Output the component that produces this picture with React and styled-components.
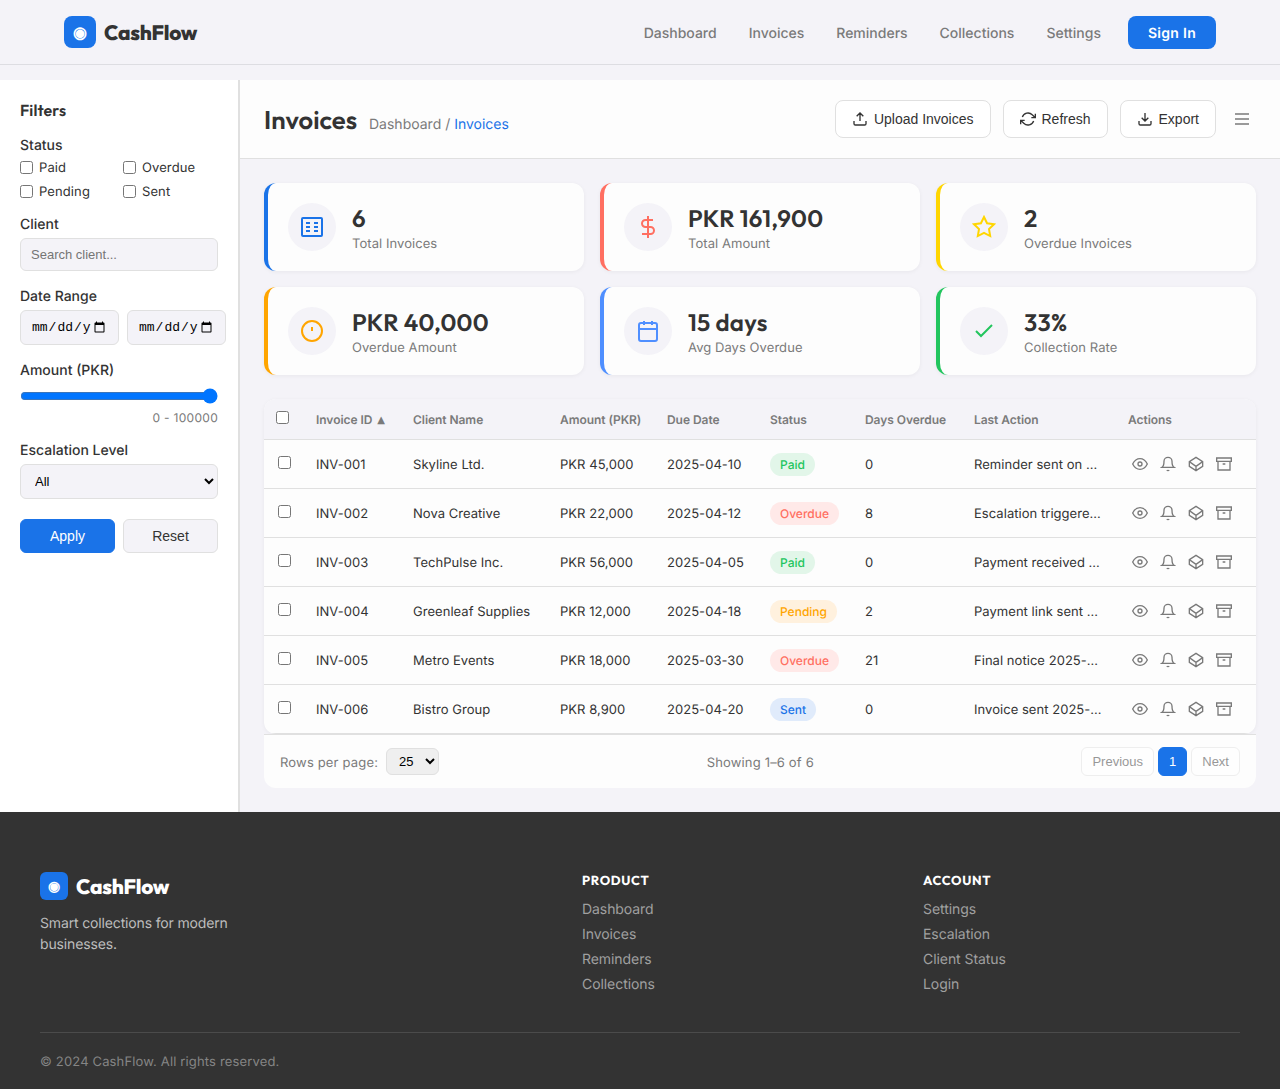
import React, { useState } from "react";
import styled, { createGlobalStyle, css } from "styled-components";

const navLinks = ["Dashboard", "Invoices", "Reminders", "Collections", "Settings"];

const stats = [
  { value: "6", label: "Total Invoices", color: "#1a73e8", icon: "sheet" },
  { value: "PKR 161,900", label: "Total Amount", color: "#ff6f61", icon: "dollar" },
  { value: "2", label: "Overdue Invoices", color: "#ffd600", icon: "star" },
  { value: "PKR 40,000", label: "Overdue Amount", color: "#ffa500", icon: "alert" },
  { value: "15 days", label: "Avg Days Overdue", color: "#4f8fff", icon: "calendar" },
  { value: "33%", label: "Collection Rate", color: "#22c55e", icon: "check" },
];

const invoices = [
  { id: "INV-001", client: "Skyline Ltd.", amount: "PKR 45,000", due: "2025-04-10", status: "Paid", days: 0, action: "Reminder sent on …" },
  { id: "INV-002", client: "Nova Creative", amount: "PKR 22,000", due: "2025-04-12", status: "Overdue", days: 8, action: "Escalation triggere…" },
  { id: "INV-003", client: "TechPulse Inc.", amount: "PKR 56,000", due: "2025-04-05", status: "Paid", days: 0, action: "Payment received …" },
  { id: "INV-004", client: "Greenleaf Supplies", amount: "PKR 12,000", due: "2025-04-18", status: "Pending", days: 2, action: "Payment link sent …" },
  { id: "INV-005", client: "Metro Events", amount: "PKR 18,000", due: "2025-03-30", status: "Overdue", days: 21, action: "Final notice 2025-…" },
  { id: "INV-006", client: "Bistro Group", amount: "PKR 8,900", due: "2025-04-20", status: "Sent", days: 0, action: "Invoice sent 2025-…" },
];

const columns = ["Client Name", "Amount (PKR)", "Due Date", "Status", "Days Overdue", "Last Action", "Actions"];
const columnWidths = [40, 97, 147, 107, 103, 95, 109, 154, 140];

const footerColumns = [
  { title: "PRODUCT", links: ["Dashboard", "Invoices", "Reminders", "Collections"] },
  { title: "ACCOUNT", links: ["Settings", "Escalation", "Client Status", "Login"] },
];

const badgeColors = {
  Paid: { color: "#22c55e", background: "#e2f6e9" },
  Overdue: { color: "#ff6f61", background: "#ffe9e8" },
  Pending: { color: "#ffa500", background: "#fff1de" },
  Sent: { color: "#1a73e8", background: "#e0ebfb" },
};

const paths = {
  sheet: (
    <>
      <rect x="2" y="3" width="20" height="18" rx="1" />
      <path d="M6 8h4M14 8h4M6 12h4M14 12h4M6 16h4M14 16h4" />
    </>
  ),
  dollar: <path d="M12 1v22M17 5H9.5a3.5 3.5 0 0 0 0 7h5a3.5 3.5 0 0 1 0 7H6" />,
  star: <path d="M12 2l3.09 6.26L22 9.27l-5 4.87 1.18 6.88L12 17.77l-6.18 3.25L7 14.14 2 9.27l6.91-1.01z" />,
  alert: (
    <>
      <circle cx="12" cy="12" r="10" />
      <path d="M12 8v4" />
    </>
  ),
  calendar: (
    <>
      <rect x="3" y="4" width="18" height="18" rx="2" />
      <path d="M16 2v4M8 2v4M3 10h18" />
    </>
  ),
  check: <path d="M20 6L9 17l-5-5" />,
  upload: <path d="M21 15v4a2 2 0 0 1-2 2H5a2 2 0 0 1-2-2v-4M17 8l-5-5-5 5M12 3v12" />,
  download: <path d="M21 15v4a2 2 0 0 1-2 2H5a2 2 0 0 1-2-2v-4M7 10l5 5 5-5M12 15V3" />,
  refresh: <path d="M23 4v6h-6M1 20v-6h6M3.51 9a9 9 0 0 1 14.85-3.36L23 10M1 14l4.64 4.36A9 9 0 0 0 20.49 15" />,
  menu: <path d="M3.6 12h16.8M3.6 6h16.8M3.6 18h16.8" />,
  eye: (
    <>
      <path d="M1 12s4-8 11-8 11 8 11 8-4 8-11 8-11-8-11-8z" />
      <circle cx="12" cy="12" r="3" />
    </>
  ),
  bell: <path d="M18 8A6 6 0 0 0 6 8c0 7-3 9-3 9h18s-3-2-3-9M13.73 21a2 2 0 0 1-3.46 0" />,
  box: <path d="M12 2l10 6.5v7L12 22 2 15.5v-7zM12 22v-6.5M22 8.5l-10 7-10-7" />,
  archive: <path d="M21 8v13H3V8M1 3h22v5H1zM10 12h4" />,
};

const Icon = ({ name, size = 16 }) => (
  <svg width={size} height={size} viewBox="0 0 24 24" fill="none" stroke="currentColor" strokeWidth="2">
    {paths[name]}
  </svg>
);

const Header = () => (
  <S.Header>
    <S.Brand>
      <S.Logo>◉</S.Logo>
      <S.BrandName>CashFlow</S.BrandName>
    </S.Brand>
    <S.Nav>
      {navLinks.map((link) => (
        <S.NavLink key={link}>{link}</S.NavLink>
      ))}
      <S.SignIn>Sign In</S.SignIn>
    </S.Nav>
  </S.Header>
);

const Filters = () => {
  const [amount, setAmount] = useState(100000);

  return (
    <S.Sidebar>
      <h3>Filters</h3>
      <S.Label>Status</S.Label>
      <S.StatusGrid>
        {["Paid", "Overdue", "Pending", "Sent"].map((status) => (
          <label key={status}>
            <S.Check type="checkbox" />
            <span>{status}</span>
          </label>
        ))}
      </S.StatusGrid>
      <S.Label>Client</S.Label>
      <S.ClientInput placeholder="Search client..." />
      <S.Label>Date Range</S.Label>
      <S.DateRow>
        <S.DateInput type="date" />
        <S.DateInput type="date" />
      </S.DateRow>
      <S.Label>Amount (PKR)</S.Label>
      <S.Range type="range" min="0" max="100000" value={amount} onChange={(e) => setAmount(e.target.value)} />
      <S.RangeText>0 - {amount}</S.RangeText>
      <S.Label>Escalation Level</S.Label>
      <S.LevelSelect>
        <option>All</option>
      </S.LevelSelect>
      <S.FilterButtons>
        <S.FilterButton $primary>Apply</S.FilterButton>
        <S.FilterButton>Reset</S.FilterButton>
      </S.FilterButtons>
    </S.Sidebar>
  );
};

const InvoiceTable = () => (
  <S.TableBox>
    <S.Table>
      <colgroup>
        {columnWidths.map((width, i) => (
          <col key={i} width={width} />
        ))}
      </colgroup>
      <thead>
        <tr>
          <S.HeadCell>
            <S.Check type="checkbox" $head />
          </S.HeadCell>
          <S.HeadCell>
            Invoice ID <S.SortArrow>▲</S.SortArrow>
          </S.HeadCell>
          {columns.map((column) => (
            <S.HeadCell key={column}>{column}</S.HeadCell>
          ))}
        </tr>
      </thead>
      <tbody>
        {invoices.map((invoice) => (
          <tr key={invoice.id}>
            <S.Cell>
              <S.Check type="checkbox" $row />
            </S.Cell>
            <S.Cell $text>{invoice.id}</S.Cell>
            <S.Cell $text>{invoice.client}</S.Cell>
            <S.Cell $text>{invoice.amount}</S.Cell>
            <S.Cell $text>{invoice.due}</S.Cell>
            <S.Cell>
              <S.Badge $status={invoice.status}>{invoice.status}</S.Badge>
            </S.Cell>
            <S.Cell $text>{invoice.days}</S.Cell>
            <S.Cell $text>{invoice.action}</S.Cell>
            <S.Cell>
              <S.Actions>
                {["eye", "bell", "box", "archive"].map((name) => (
                  <S.IconButton key={name}>
                    <Icon name={name} />
                  </S.IconButton>
                ))}
              </S.Actions>
            </S.Cell>
          </tr>
        ))}
      </tbody>
    </S.Table>
  </S.TableBox>
);

const Footer = () => (
  <S.Footer>
    <S.FooterGrid>
      <div>
        <S.Brand>
          <S.Logo $small>◉</S.Logo>
          <S.BrandName $light>CashFlow</S.BrandName>
        </S.Brand>
        <S.Tagline>Smart collections for modern businesses.</S.Tagline>
      </div>
      {footerColumns.map(({ title, links }) => (
        <S.FooterColumn key={title}>
          <h4>{title}</h4>
          {links.map((link) => (
            <a key={link}>{link}</a>
          ))}
        </S.FooterColumn>
      ))}
    </S.FooterGrid>
    <S.Copyright>© 2024 CashFlow. All rights reserved.</S.Copyright>
  </S.Footer>
);

const App = () => (
  <>
    <GlobalStyle />
    <Header />
    <S.Layout>
      <Filters />
      <S.Main>
        <S.PageHead>
          <S.Title>
            <h1>Invoices</h1>
            <p>
              Dashboard / <span>Invoices</span>
            </p>
          </S.Title>
          <S.Toolbar>
            <S.ToolButton>
              <Icon name="upload" />
              Upload Invoices
            </S.ToolButton>
            <S.ToolButton>
              <Icon name="refresh" />
              Refresh
            </S.ToolButton>
            <S.ToolButton>
              <Icon name="download" />
              Export
            </S.ToolButton>
            <S.MenuButton>
              <Icon name="menu" size={20} />
            </S.MenuButton>
          </S.Toolbar>
        </S.PageHead>
        <S.Content>
          <S.Stats>
            {stats.map(({ value, label, color, icon }) => (
              <S.Card key={label} $color={color}>
                <S.CardIcon $color={color}>
                  <Icon name={icon} size={24} />
                </S.CardIcon>
                <S.CardText>
                  <S.Value>{value}</S.Value>
                  <S.Caption>{label}</S.Caption>
                </S.CardText>
              </S.Card>
            ))}
          </S.Stats>
          <InvoiceTable />
          <S.Pagination>
            <S.RowsPerPage>
              <S.PageText>Rows per page:</S.PageText>
              <select>
                <option>25</option>
              </select>
            </S.RowsPerPage>
            <S.PageText>Showing 1–6 of 6</S.PageText>
            <S.Pages>
              <S.PageButton disabled>Previous</S.PageButton>
              <S.PageButton $active>1</S.PageButton>
              <S.PageButton disabled>Next</S.PageButton>
            </S.Pages>
          </S.Pagination>
        </S.Content>
      </S.Main>
    </S.Layout>
    <Footer />
  </>
);

const display = css`
  font-family: Outfit, Lato, sans-serif;
`;

const field = css`
  background: #f4f3f8;
  border: 1px solid #e0e0e0;
  border-radius: 6px;
`;

const GlobalStyle = createGlobalStyle`
  * {
    box-sizing: border-box;
  }
  body {
    margin: 0;
    background: #f4f3f8;
    color: #333;
    font-family: Inter, sans-serif;
    text-rendering: geometricPrecision;
  }
  h1, h3, h4, p {
    margin: 0;
  }
  button, input, select {
    font-family: "Liberation Sans", Arial, sans-serif;
  }
`;

const S = {
  Header: styled.header`
    height: 65px;
    padding: 0 64px;
    border-bottom: 1px solid #dddde2;
    display: flex;
    align-items: center;
    justify-content: space-between;
  `,
  Brand: styled.div`
    display: flex;
    align-items: center;
    gap: 8px;
  `,
  Logo: styled.div`
    width: ${({ $small }) => ($small ? 28 : 32)}px;
    height: ${({ $small }) => ($small ? 28 : 32)}px;
    border-radius: ${({ $small }) => ($small ? 6 : 8)}px;
    background: #1a73e8;
    color: #fff;
    font-size: ${({ $small }) => ($small ? 14 : 16)}px;
    font-weight: bold;
    display: flex;
    align-items: center;
    justify-content: center;
  `,
  BrandName: styled.span`
    ${display}
    padding-top: 3px;
    font-size: 20.8px;
    font-weight: 800;
    line-height: 25px;
    letter-spacing: -0.28px;
    color: ${({ $light }) => ($light ? "#fff" : "#333")};
  `,
  Nav: styled.nav`
    display: flex;
    align-items: center;
    gap: 32px;
    font-size: 14px;
    font-weight: 500;
    color: #7a7a7a;
  `,
  NavLink: styled.a`
    padding-top: 2px;
  `,
  SignIn: styled.a`
    margin-left: -5px;
    padding: 9px 20px 7px;
    border-radius: 8px;
    background: #1a73e8;
    color: #fff;
    font-weight: 600;
    line-height: 17px;
    letter-spacing: 0.28px;
  `,
  Layout: styled.div`
    margin-top: 15px;
    display: flex;
  `,
  Sidebar: styled.aside`
    width: 240px;
    flex-shrink: 0;
    padding: 20px;
    background: #fff;
    border-right: 2px solid #e0e0e0;
    > h3 {
      ${display}
      font-size: 16px;
      font-weight: 600;
      line-height: 22px;
      letter-spacing: 0.1px;
      margin-bottom: 15px;
    }
  `,
  Label: styled.div`
    font-size: 14px;
    font-weight: 500;
    line-height: 17px;
    margin-bottom: 5px;
  `,
  Check: styled.input`
    width: 13px;
    height: 13px;
    margin: 0;
    ${({ $head }) => $head && "display: block; margin: -4px 0 0;"}
    ${({ $row }) => $row && "display: block; margin: -4px 0 0 2px;"}
  `,
  StatusGrid: styled.div`
    display: grid;
    grid-template-columns: 95px 95px;
    gap: 8px;
    margin-bottom: 17px;
    > label {
      display: flex;
      align-items: center;
      gap: 6px;
      height: 16px;
      font-size: 13px;
      letter-spacing: 0.1px;
    }
    span {
      padding-top: 2px;
    }
  `,
  ClientInput: styled.input`
    ${field}
    display: block;
    width: 198px;
    height: 33px;
    padding: 0 10px;
    font-size: 13px;
    margin-bottom: 17px;
  `,
  DateRow: styled.div`
    display: flex;
    gap: 8px;
    margin-bottom: 17px;
  `,
  DateInput: styled.input`
    ${field}
    width: 99px;
    flex-shrink: 0;
    height: 35px;
    padding: 8px 10px;
    font-family: "Liberation Mono", monospace;
    font-size: 13px;
  `,
  Range: styled.input`
    display: block;
    width: 198px;
    height: 16px;
    margin: 9px 0 6px;
  `,
  RangeText: styled.div`
    font-size: 12px;
    line-height: 16px;
    letter-spacing: 0.28px;
    color: #7a7a7a;
    text-align: right;
    margin-bottom: 16px;
  `,
  LevelSelect: styled.select`
    ${field}
    display: block;
    width: 198px;
    height: 35px;
    padding: 0 10px;
    font-size: 13px;
  `,
  FilterButtons: styled.div`
    display: flex;
    gap: 8px;
    margin-top: 20px;
  `,
  FilterButton: styled.button`
    ${field}
    flex: 1;
    height: 34px;
    font-size: 14px;
    color: #333;
    ${({ $primary }) =>
      $primary &&
      css`
        background: #1a73e8;
        border-color: #1a73e8;
        color: #fff;
      `}
  `,
  Main: styled.main`
    flex: 1;
    min-width: 0;
  `,
  PageHead: styled.div`
    height: 79px;
    padding: 0 24px;
    background: #fdfdfd;
    border-bottom: 1px solid #e0e0e0;
    display: flex;
    align-items: center;
    justify-content: space-between;
  `,
  Title: styled.div`
    display: flex;
    align-items: baseline;
    gap: 12px;
    > h1 {
      ${display}
      font-size: 25.6px;
      font-weight: 600;
    }
    > p {
      font-size: 14px;
      color: #7a7a7a;
    }
    span {
      color: #1a73e8;
    }
  `,
  Toolbar: styled.div`
    display: flex;
    align-items: center;
    gap: 12px;
  `,
  ToolButton: styled.button`
    height: 38px;
    padding: 0 16px;
    display: flex;
    align-items: center;
    gap: 6px;
    background: #fff;
    border: 1px solid #e0e0e0;
    border-radius: 8px;
    color: #333;
    font-size: 14px;
  `,
  MenuButton: styled.button`
    display: flex;
    padding: 4px;
    border: 0;
    background: none;
    color: #7a7a7a;
  `,
  Content: styled.div`
    padding: 24px;
  `,
  Stats: styled.div`
    display: grid;
    grid-template-columns: repeat(3, 1fr);
    gap: 16px;
    margin-bottom: 24px;
  `,
  Card: styled.div`
    height: 88px;
    padding: 0 20px;
    display: flex;
    align-items: center;
    gap: 16px;
    background: #fdfdfd;
    border-left: 4px solid ${({ $color }) => $color};
    border-radius: 12px;
    box-shadow: 0 1px 4px rgba(0, 0, 0, 0.05);
  `,
  CardIcon: styled.div`
    width: 48px;
    height: 48px;
    border-radius: 50%;
    background: #f4f3f8;
    color: ${({ $color }) => $color};
    display: flex;
    align-items: center;
    justify-content: center;
  `,
  CardText: styled.div`
    padding-top: 2px;
  `,
  Value: styled.div`
    ${display}
    font-size: 24px;
    font-weight: 600;
    line-height: 30px;
    letter-spacing: 0.25px;
  `,
  Caption: styled.div`
    font-size: 13px;
    line-height: 16px;
    letter-spacing: 0.06px;
    margin-top: 2px;
    color: #7a7a7a;
  `,
  TableBox: styled.div`
    border-radius: 12px;
    overflow: hidden;
    background: #fdfdfd;
    box-shadow: 0 1px 4px rgba(0, 0, 0, 0.05);
  `,
  Table: styled.table`
    width: 100%;
    table-layout: fixed;
    border-collapse: separate;
    border-spacing: 0;
  `,
  HeadCell: styled.th`
    height: 41px;
    padding: 0 12px;
    background: #f4f3f8;
    border-bottom: 1px solid #e0e0e0;
    color: #7a7a7a;
    font-size: 12px;
    font-weight: 600;
    letter-spacing: -0.05px;
    text-align: left;
    white-space: nowrap;
  `,
  Cell: styled.td`
    height: 49px;
    padding: ${({ $text }) => ($text ? "1px" : 0)} 12px 0;
    border-bottom: 1px solid #e0e0e0;
    font-size: 13px;
    letter-spacing: 0.04px;
    white-space: nowrap;
  `,
  SortArrow: styled.span`
    margin-left: 2px;
    font-family: "DejaVu Sans", sans-serif;
    font-size: 10px;
    vertical-align: 0.5px;
  `,
  Badge: styled.span`
    display: inline-block;
    padding: 4px 10px;
    border-radius: 12px;
    font-size: 12px;
    font-weight: 500;
    line-height: 15px;
    letter-spacing: 0;
    color: ${({ $status }) => badgeColors[$status].color};
    background: ${({ $status }) => badgeColors[$status].background};
  `,
  Actions: styled.div`
    display: flex;
    gap: 4px;
  `,
  IconButton: styled.button`
    display: flex;
    padding: 4px;
    border: 0;
    background: none;
    color: #7a7a7a;
  `,
  Pagination: styled.div`
    height: 54px;
    padding: 0 16px;
    display: flex;
    align-items: center;
    justify-content: space-between;
    background: #fdfdfd;
    border-top: 1px solid #e0e0e0;
    border-radius: 0 0 12px 12px;
    color: #7a7a7a;
    font-size: 13px;
  `,
  PageText: styled.span`
    padding-top: 2px;
    letter-spacing: 0.17px;
  `,
  RowsPerPage: styled.div`
    display: flex;
    align-items: center;
    gap: 8px;
    > select {
      width: 53px;
      height: 27px;
      padding: 0 8px;
      border: 1px solid #e0e0e0;
      border-radius: 6px;
      background: #efefef;
      font-size: 13px;
    }
  `,
  Pages: styled.div`
    display: flex;
    gap: 4px;
  `,
  PageButton: styled.button`
    height: 29px;
    padding: 0 10px;
    border: 1px solid ${({ $active }) => ($active ? "#1a73e8" : "#e0e0e0")};
    border-radius: 6px;
    background: ${({ $active }) => ($active ? "#1a73e8" : "#fff")};
    color: ${({ $active }) => ($active ? "#fff" : "#333")};
    font-size: 13px;
    &:disabled {
      opacity: 0.5;
    }
  `,
  Footer: styled.footer`
    height: 277px;
    padding: 60px 40px 0;
    background: #333;
  `,
  FooterGrid: styled.div`
    height: 161px;
    display: grid;
    grid-template-columns: 518px 1fr 1fr;
    gap: 24px;
    border-bottom: 1px solid #4b4b4b;
  `,
  Tagline: styled.p`
    width: 220px;
    margin-top: 13px;
    color: #bdbdbd;
    font-size: 14px;
    line-height: 21px;
    letter-spacing: -0.15px;
  `,
  FooterColumn: styled.div`
    padding-top: 1px;
    display: flex;
    flex-direction: column;
    gap: 8px;
    > h4 {
      ${display}
      color: #fff;
      font-size: 13px;
      font-weight: 700;
      line-height: 17px;
      letter-spacing: 0.65px;
      margin-bottom: 3px;
    }
    > a {
      color: #a0a0a0;
      font-size: 14px;
      line-height: 17px;
      letter-spacing: -0.07px;
    }
  `,
  Copyright: styled.p`
    margin-top: 20px;
    color: #858585;
    font-size: 13px;
    line-height: 18px;
    letter-spacing: 0.15px;
  `,
};

export default App;
